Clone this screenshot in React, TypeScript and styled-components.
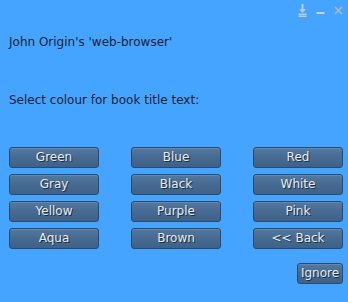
import { FC } from 'react';
import styled, { createGlobalStyle } from 'styled-components';

const GlobalStyle = createGlobalStyle`
  html, body {
    margin: 0;
    padding: 0;
    background: #44a4ff;
  }
  body {
    font-family: 'DejaVu Sans', 'Liberation Sans', sans-serif;
  }
`;

const Window = styled.div`
  width: 348px;
  height: 302px;
  background: #44a4ff;
  display: flex;
  flex-direction: column;
  box-sizing: border-box;
  overflow: hidden;
`;

const TitleBar = styled.div`
  height: 20px;
  display: flex;
  justify-content: flex-end;
  align-items: center;
  gap: 9px;
  padding: 0 5px 0 0;
  padding-top: 0;
`;

const IconButton = styled.span`
  display: flex;
  width: 9px;
  height: 16px;
  align-items: center;
  justify-content: center;
`;

const Body = styled.div`
  display: flex;
  flex-direction: column;
  padding: 15px 5px 0 9px;
`;

const Label = styled.div<{ $gap?: number }>`
  font-size: 12px;
  line-height: 14px;
  color: #1b2235;
  margin-top: ${(p) => p.$gap ?? 0}px;
`;

const ColourGrid = styled.div`
  display: grid;
  grid-template-columns: 90px 90px 90px;
  column-gap: 32px;
  row-gap: 6px;
  margin-top: 40px;
`;

const Button = styled.button<{ $width?: number }>`
  width: ${(p) => (p.$width ? `${p.$width}px` : '100%')};
  height: 21px;
  padding: 0;
  border: 1px solid #2b4a6c;
  border-radius: 3px;
  background: linear-gradient(#5479a0, #476b92 45%, #3f6188);
  box-shadow: inset 0 1px 0 rgba(255, 255, 255, 0.12);
  color: #e8ecf0;
  font-family: 'DejaVu Sans', 'Liberation Sans', sans-serif;
  font-size: 12px;
  line-height: 19px;
  text-shadow: 1px 1px 0 #1e2e40;
  cursor: pointer;
`;

const Footer = styled.div`
  display: flex;
  justify-content: flex-end;
  margin-top: 14px;
`;

const colours = [
  'Green', 'Blue', 'Red',
  'Gray', 'Black', 'White',
  'Yellow', 'Purple', 'Pink',
  'Aqua', 'Brown', '<< Back',
];

const App: FC = () => (
  <Window>
    <GlobalStyle />
    <TitleBar>
      <IconButton>
        <svg width='9' height='14' viewBox='0 0 9 14'>
          <path d='M3.5 1h2v5h2.5L4.5 10 1 6h2.5z' fill='#b8c8d8' />
          <rect x='0.5' y='10.5' width='8' height='1.5' fill='#b8c8d8' />
          <rect x='0.5' y='12.5' width='8' height='1.5' fill='#d8c8a0' />
        </svg>
      </IconButton>
      <IconButton>
        <svg width='9' height='14' viewBox='0 0 9 14'>
          <rect x='0.5' y='9' width='8' height='2' fill='#c8d0d8' />
        </svg>
      </IconButton>
      <IconButton>
        <svg width='9' height='14' viewBox='0 0 9 14'>
          <path d='M1 4l7 7M8 4l-7 7' stroke='#a8b8c8' strokeWidth='1.6' />
        </svg>
      </IconButton>
    </TitleBar>
    <Body>
      <Label>John Origin's 'web-browser'</Label>
      <Label $gap={44}>Select colour for book title text:</Label>
      <ColourGrid>
        {colours.map((c) => (
          <Button key={c}>{c}</Button>
        ))}
      </ColourGrid>
      <Footer>
        <Button $width={46}>Ignore</Button>
      </Footer>
    </Body>
  </Window>
);

export default App;
